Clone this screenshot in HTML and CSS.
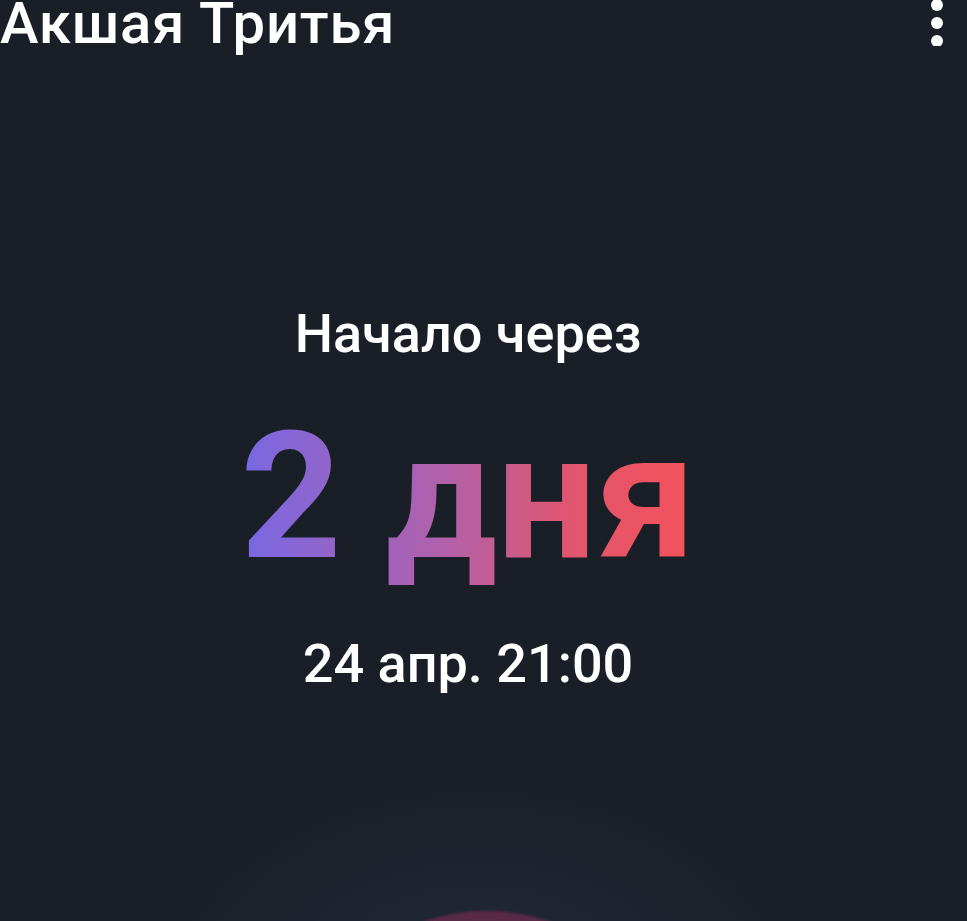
FILE: index.html
```html
<!DOCTYPE html>
<html lang="ru">
<head>
<meta charset="utf-8">
<title>Акшая Тритья</title>
<link rel="stylesheet" href="styles.css">
</head>
<body>
<div class="page">
  <header class="header">
    <h1 class="title">Акшая Тритья</h1>
    <svg class="kebab" width="24" height="52" viewBox="0 0 24 52" aria-hidden="true">
      <circle cx="12" cy="11" r="6" fill="#fff"/>
      <circle cx="12" cy="29" r="6" fill="#fff"/>
      <circle cx="12" cy="47" r="6" fill="#fff"/>
    </svg>
  </header>
  <main class="countdown">
    <div class="label">Начало через</div>
    <div class="big"><span class="grad">2 дня</span></div>
    <div class="date">24 апр. 21:00</div>
  </main>
</div>
</body>
</html>
```
FILE: styles.css
```css
html, body {
  margin: 0;
  padding: 0;
  height: 100%;
}
body {
  background-color: #1a1f27;
  background-image:
    radial-gradient(circle 193px at 487px 1102px, #582a46 98%, rgba(88,42,70,0) 100%),
    radial-gradient(ellipse 330px 230px at 480px 1010px, #232a3b 0%, rgba(35,42,59,0.6) 45%, rgba(26,31,39,0) 100%);
  background-repeat: no-repeat;
  font-family: Roboto, "Noto Sans", sans-serif;
  color: #fff;
  overflow: hidden;
}
.page {
  display: flex;
  flex-direction: column;
}
.header {
  display: flex;
  justify-content: space-between;
  align-items: flex-start;
  margin-top: -6px;
  height: 58px;
}
.title {
  margin: 0;
  font-size: 58px;
  line-height: 1;
  font-weight: 500;
  letter-spacing: 0.85px;
  white-space: nowrap;
}
.kebab {
  margin-right: 18px;
}
.countdown {
  display: flex;
  flex-direction: column;
  align-items: center;
  padding-right: 31px;
}
.label {
  margin-top: 254.5px;
  font-size: 54px;
  line-height: 1;
  font-weight: 500;
}
.big {
  margin-top: 47.5px;
  font-size: 177px;
  line-height: 1;
  font-weight: 700;
}
.grad {
  display: inline-block;
  background-image: linear-gradient(90deg, #7868e4 0%, #b261aa 45%, #e0566f 72%, #f5525a 100%);
  -webkit-background-clip: text;
  background-clip: text;
  color: transparent;
}
.date {
  margin-top: 51.5px;
  font-size: 54px;
  line-height: 1;
  font-weight: 500;
}
```
